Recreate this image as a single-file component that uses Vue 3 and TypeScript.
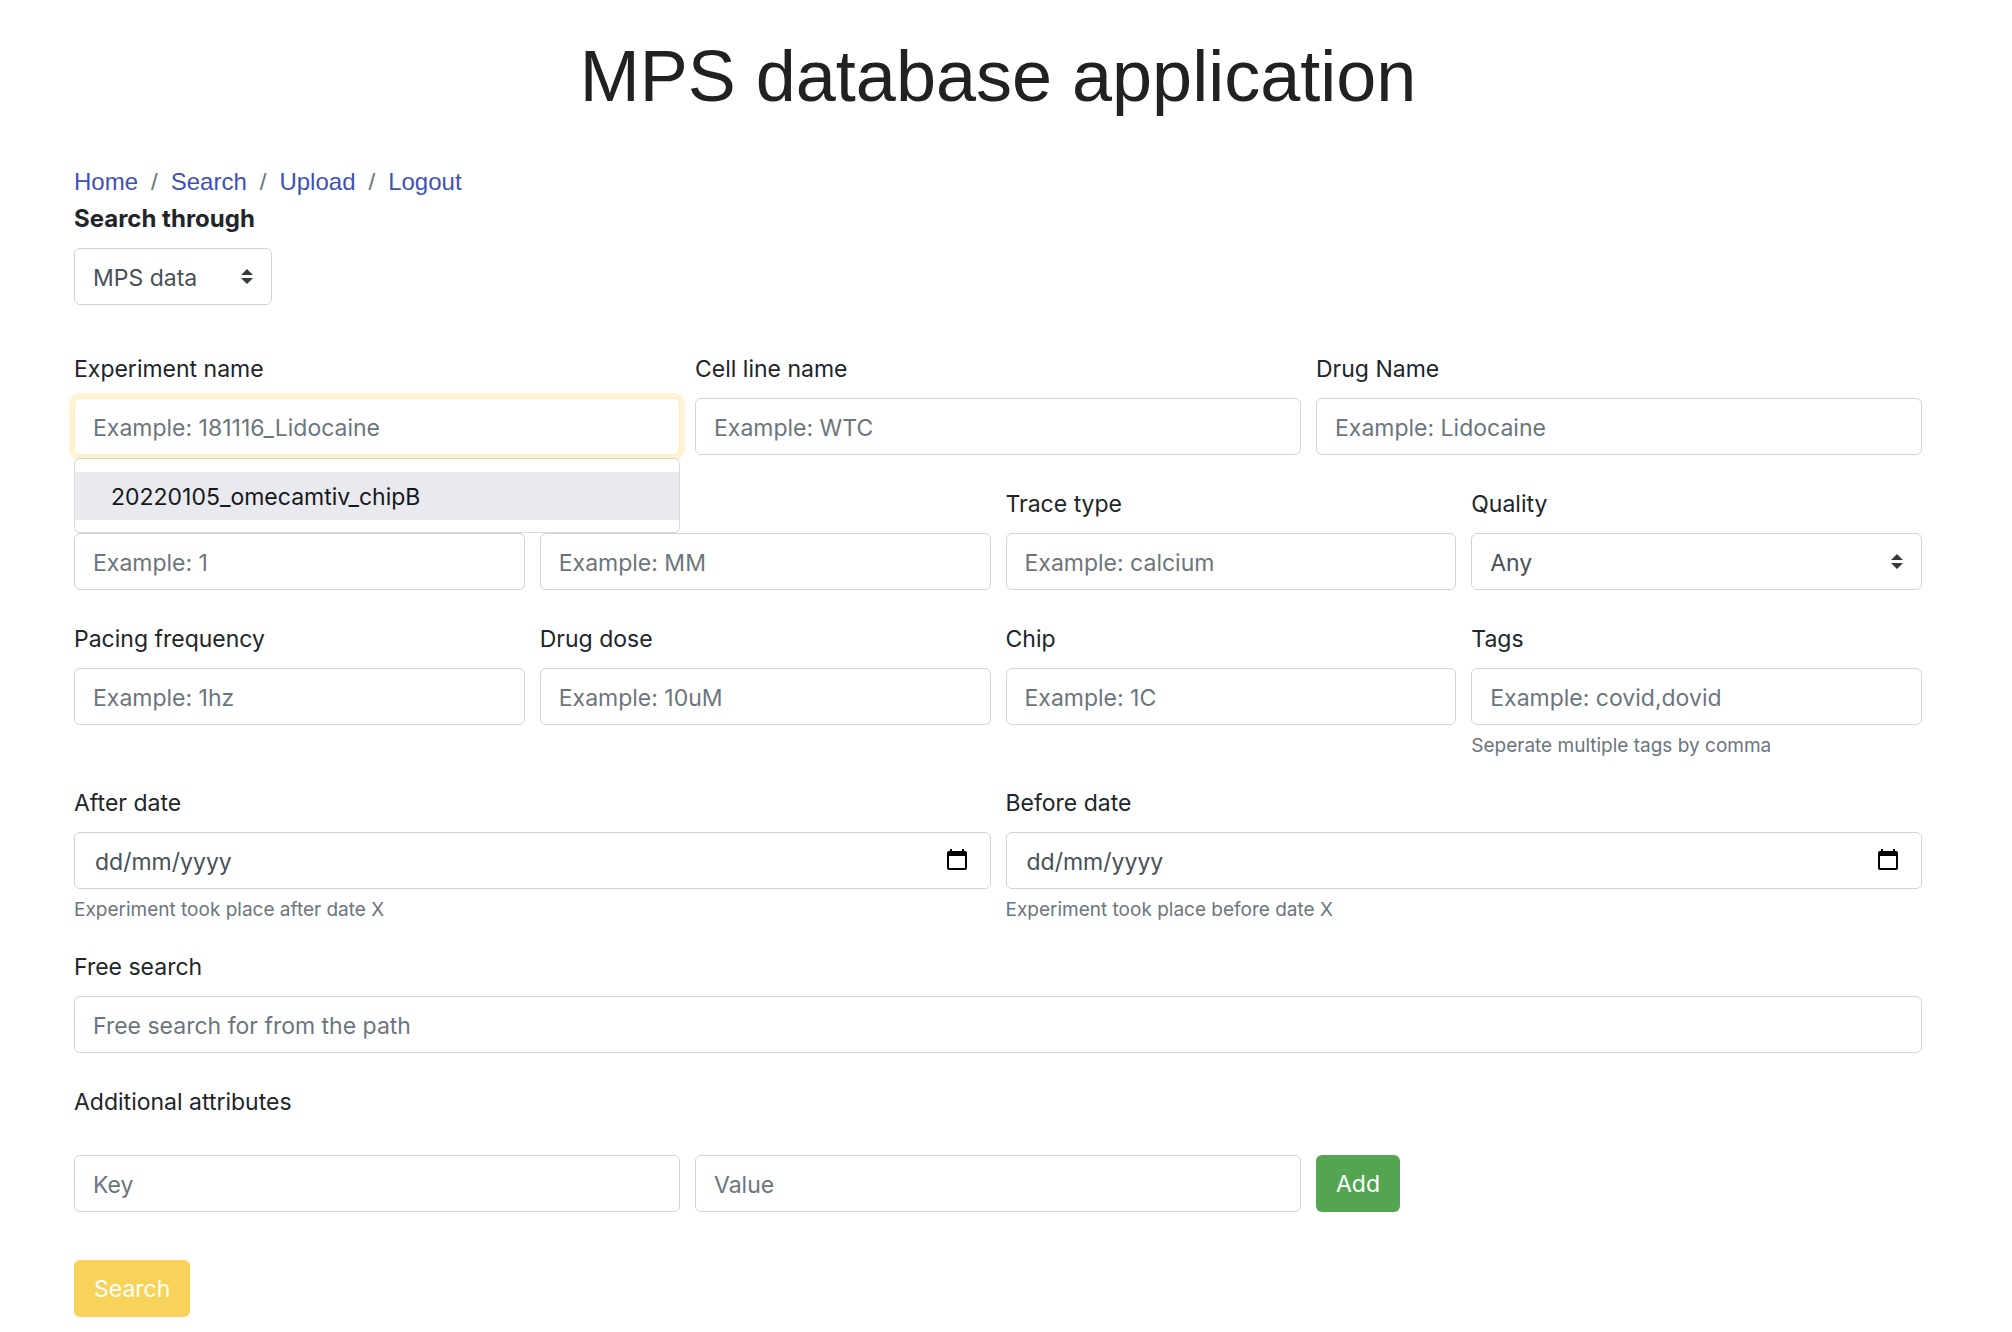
<script setup lang="ts">
import { ref } from 'vue'

interface Field {
  id: string
  label?: string
  name?: string
  placeholder?: string
  options?: string[]
  help?: string
  date?: boolean
  active?: boolean
  suggestions?: string[]
}

const links: string[] = ['Home', 'Search', 'Upload', 'Logout']

const rows: Field[][] = [
  [
    {
      id: 'experiment',
      label: 'Experiment name',
      placeholder: 'Example: 181116_Lidocaine',
      active: true,
      suggestions: ['20220105_omecamtiv_chipB'],
    },
    { id: 'cell-line', label: 'Cell line name', placeholder: 'Example: WTC' },
    { id: 'drug', label: 'Drug Name', placeholder: 'Example: Lidocaine' },
  ],
  [
    { id: 'run', name: 'Run', placeholder: 'Example: 1' },
    { id: 'media', name: 'Media', placeholder: 'Example: MM' },
    { id: 'trace', label: 'Trace type', placeholder: 'Example: calcium' },
    { id: 'quality', label: 'Quality', options: ['Any'] },
  ],
  [
    { id: 'pacing', label: 'Pacing frequency', placeholder: 'Example: 1hz' },
    { id: 'dose', label: 'Drug dose', placeholder: 'Example: 10uM' },
    { id: 'chip', label: 'Chip', placeholder: 'Example: 1C' },
    { id: 'tags', label: 'Tags', placeholder: 'Example: covid,dovid', help: 'Seperate multiple tags by comma' },
  ],
  [
    { id: 'after', label: 'After date', placeholder: 'dd/mm/yyyy', date: true, help: 'Experiment took place after date X' },
    { id: 'before', label: 'Before date', placeholder: 'dd/mm/yyyy', date: true, help: 'Experiment took place before date X' },
  ],
  [{ id: 'free', label: 'Free search', placeholder: 'Free search for from the path' }],
]

const values = ref<Record<string, string>>({ quality: 'Any' })
const open = ref(true)

function choose(id: string, value: string): void {
  values.value[id] = value
  open.value = false
}
</script>

<template>
  <main class="page">
    <h1 class="title">MPS database application</h1>

    <nav aria-label="Breadcrumb">
      <ol class="breadcrumb">
        <li v-for="link in links" :key="link"><a href="#">{{ link }}</a></li>
      </ol>
    </nav>

    <form @submit.prevent>
      <div class="source">
        <label class="label strong" for="source">Search through</label>
        <select id="source" class="control select">
          <option>MPS data</option>
        </select>
      </div>

      <div v-for="(row, r) in rows" :key="r" class="row">
        <div v-for="field in row" :key="field.id" class="field">
          <label v-if="field.label" class="label" :for="field.id">{{ field.label }}</label>
          <select v-if="field.options" :id="field.id" v-model="values[field.id]" class="control select">
            <option v-for="option in field.options" :key="option">{{ option }}</option>
          </select>
          <div v-else class="box">
            <input
              :id="field.id"
              v-model="values[field.id]"
              type="text"
              class="control"
              :class="{ active: field.active, date: field.date }"
              :aria-label="field.name"
              :placeholder="field.placeholder"
              autocomplete="off"
            />
            <button v-if="field.date" type="button" class="picker" aria-label="Open calendar">
              <svg width="20" height="21" viewBox="0 0 20 21" aria-hidden="true">
                <path
                  fill="currentColor"
                  fill-rule="evenodd"
                  d="M3 0h2v2h10V0h2v2h1a2 2 0 0 1 2 2v15a2 2 0 0 1-2 2H2a2 2 0 0 1-2-2V4a2 2 0 0 1 2-2h1zM2 7v12h16V7z"
                />
              </svg>
            </button>
            <ul v-if="field.suggestions && open" class="menu">
              <li v-for="item in field.suggestions" :key="item">
                <button type="button" class="item" @click="choose(field.id, item)">{{ item }}</button>
              </li>
            </ul>
          </div>
          <small v-if="field.help" class="help">{{ field.help }}</small>
        </div>
      </div>

      <fieldset class="attributes">
        <legend class="label">Additional attributes</legend>
        <div class="attribute-row">
          <input class="control" type="text" placeholder="Key" aria-label="Key" />
          <input class="control" type="text" placeholder="Value" aria-label="Value" />
          <button type="button" class="button add">Add</button>
        </div>
      </fieldset>

      <button type="submit" class="button search">Search</button>
    </form>
  </main>
</template>

<style>
body {
  margin: 0;
  background: #fff;
}
</style>

<style scoped>
* {
  box-sizing: border-box;
}

.page {
  padding: 33px 90px 15px 74px;
  color: #212529;
  font-family: Inter, "Liberation Sans", sans-serif;
  font-size: 23px;
  line-height: 36px;
}

.title {
  margin: 0 0 45px;
  color: #212121;
  font-family: "Liberation Sans", Arial, sans-serif;
  font-size: 72px;
  font-weight: 400;
  line-height: 86px;
  text-align: center;
}

.breadcrumb {
  display: flex;
  margin: 0;
  padding: 0;
  list-style: none;
  font-family: "Liberation Sans", Arial, sans-serif;
  font-size: 24px;
}

.breadcrumb li + li::before {
  content: "/";
  padding: 0 13px;
  color: #6c757d;
}

.breadcrumb a {
  color: #3f51b5;
  text-decoration: none;
}

.label {
  display: block;
  margin-bottom: 10px;
  padding: 0;
  line-height: 38px;
}

.strong {
  font-size: 24px;
  font-weight: 700;
}

.source {
  margin-bottom: 45px;
}

.source .select {
  width: 198px;
}

.row {
  display: grid;
  grid-auto-flow: column;
  grid-auto-columns: minmax(0, 1fr);
  gap: 15px;
  margin-bottom: 24px;
}

.field {
  display: flex;
  flex-direction: column;
  align-self: start;
  padding-bottom: 6px;
}

.field:not(:has(.label)) {
  align-self: end;
}

.field:has(.help) {
  padding-bottom: 0;
}

.box {
  position: relative;
}

.control {
  display: block;
  width: 100%;
  height: 57px;
  margin: 0;
  padding: 2px 18px 0;
  border: 1px solid #ced4da;
  border-radius: 6px;
  outline: none;
  background-color: #fff;
  color: #495057;
  font: inherit;
}

.control::placeholder {
  color: #6c757d;
  opacity: 1;
}

.control.active {
  border-color: #ffebb5;
  box-shadow: 0 0 0 5px #fff3d6;
}

.control.date {
  padding: 2px 60px 0 20px;
}

.control.date::placeholder {
  color: #495057;
}

.select {
  appearance: none;
  background: #fff url("data:image/svg+xml,%3Csvg xmlns='http://www.w3.org/2000/svg' viewBox='0 0 4 5'%3E%3Cpath fill='%23343a40' d='M2 0L0 2h4zm0 5L0 3h4z'/%3E%3C/svg%3E") no-repeat right 18px center / 12px 15px;
}

.picker {
  position: absolute;
  top: 0;
  right: 24px;
  display: flex;
  align-items: center;
  height: 55px;
  padding: 0;
  border: 0;
  background: none;
  color: #000;
}

.menu {
  position: absolute;
  z-index: 1;
  top: 100%;
  left: 0;
  width: 100%;
  margin: 3px 0 0;
  padding: 13px 0 12px;
  border: 1px solid rgba(0, 0, 0, 0.15);
  border-radius: 6px;
  background: #fff;
  background-clip: padding-box;
  list-style: none;
}

.item {
  display: block;
  width: 100%;
  padding: 7px 36px 5px;
  border: 0;
  background: #e9eaef;
  color: #16181b;
  font: inherit;
  text-align: left;
}

.help {
  display: block;
  margin-top: 6px;
  color: #6c757d;
  font-size: 19px;
  line-height: 29px;
}

.attributes {
  margin: 0 0 48px;
  padding: 0;
  border: 0;
}

.attribute-row {
  display: grid;
  grid-template-columns: repeat(3, minmax(0, 1fr));
  gap: 15px;
  padding-top: 24px;
}

.button {
  height: 57px;
  padding: 0 20px;
  border: 0;
  border-radius: 6px;
  color: #fff;
  font: inherit;
}

.add {
  justify-self: start;
  background: #54a551;
}

.search {
  display: block;
  background: #f7d359;
}
</style>
